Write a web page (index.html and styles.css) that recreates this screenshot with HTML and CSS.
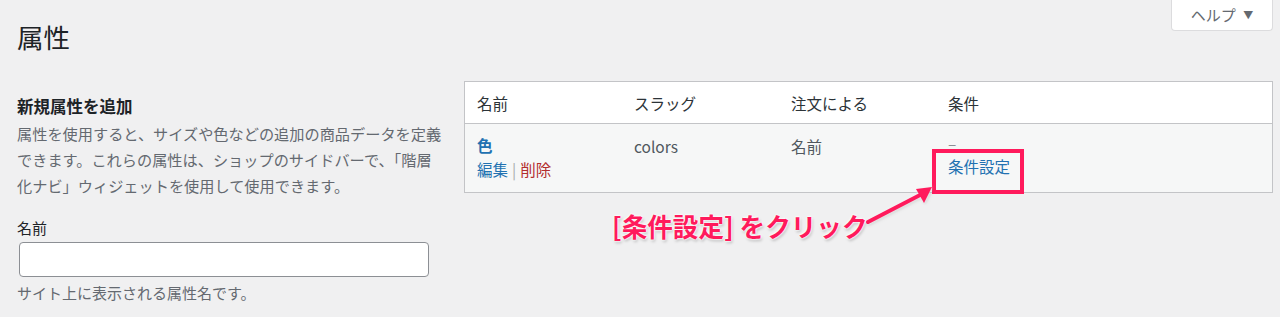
FILE: index.html
```html
<!DOCTYPE html>
<html lang="ja">
<head>
<meta charset="utf-8">
<link rel="stylesheet" href="styles.css">
</head>
<body>
<div class="page">
  <div class="top">
    <h1 class="title">属性</h1>
    <button class="help">ヘルプ <span class="caret">▼</span></button>
  </div>
  <div class="cols">
    <div class="left">
      <h2 class="sub">新規属性を追加</h2>
      <p class="desc">属性を使用すると、サイズや色などの追加の商品データを定義できます。これらの属性は、ショップのサイドバーで、「階層化ナビ」ウィジェットを使用して使用できます。</p>
      <label class="label">名前</label>
      <input class="input" type="text">
      <p class="hint">サイト上に表示される属性名です。</p>
    </div>
    <div class="right">
      <div class="table">
        <div class="row head">
          <div class="cell">名前</div>
          <div class="cell">スラッグ</div>
          <div class="cell">注文による</div>
          <div class="cell">条件</div>
        </div>
        <div class="row body">
          <div class="cell">
            <a class="name">色</a>
            <div class="actions"><a class="edit">編集</a><span class="sep">|</span><a class="del">削除</a></div>
          </div>
          <div class="cell">colors</div>
          <div class="cell">名前</div>
          <div class="cell">
            <div class="dash">–</div>
            <a class="edit">条件設定</a>
          </div>
        </div>
      </div>
    </div>
  </div>
  <div class="hl-box"></div>
  <svg class="arrow" width="80" height="56" viewBox="0 0 80 56">
    <line x1="8" y1="46" x2="62" y2="18" stroke="#ff1a5c" stroke-width="4" stroke-linecap="round"/>
    <polygon points="72,11 56,13 64,27" fill="#ff1a5c"/>
  </svg>
  <div class="note">[条件設定] をクリック</div>
</div>
</body>
</html>
```
FILE: styles.css
```css
html, body {
  margin: 0;
  padding: 0;
}
body {
  background: #f0f0f1;
  font-family: "Noto Sans CJK JP", "Noto Sans", sans-serif;
  color: #3c434a;
  width: 1280px;
  height: 317px;
  overflow: hidden;
}
.page {
  position: relative;
  padding-left: 17px;
  padding-right: 7px;
}
.top {
  display: flex;
  justify-content: space-between;
  align-items: flex-start;
}
.title {
  margin: 20px 0 0 0;
  font-size: 26.5px;
  line-height: 34px;
  font-weight: 400;
  color: #1d2327;
}
.help {
  margin-top: -1px;
  width: 102px;
  height: 32px;
  background: #fff;
  border: 1px solid #dcdcde;
  border-top: none;
  border-radius: 0 0 4px 4px;
  font-family: inherit;
  font-size: 15px;
  color: #646970;
  padding: 0;
}
.caret {
  font-size: 10px;
  margin-left: 4px;
  vertical-align: 2px;
}
.cols {
  display: flex;
  gap: 19px;
  margin-top: 27px;
}
.left {
  width: 428px;
  flex: none;
  padding-top: 13px;
}
.sub {
  margin: 0;
  font-size: 16.5px;
  line-height: 24px;
  font-weight: 700;
  color: #1d2327;
}
.desc {
  margin: 2px 0 0 0;
  font-size: 15.2px;
  line-height: 26px;
  color: #646970;
}
.label {
  display: block;
  margin-top: 18px;
  font-size: 15px;
  line-height: 24px;
  color: #1d2327;
}
.input {
  display: block;
  box-sizing: border-box;
  margin: 2px 0 0 2px;
  width: 410px;
  height: 35px;
  border: 1px solid #8c8f94;
  border-radius: 4px;
  background: #fff;
}
.hint {
  margin: 4px 0 0 0;
  font-size: 15px;
  line-height: 24px;
  color: #646970;
}
.right {
  flex: 1;
}
.table {
  border: 1px solid #c3c4c7;
  background: #fff;
}
.row {
  display: grid;
  grid-template-columns: 157px 157px 157px 1fr;
  padding-left: 12px;
}
.head {
  height: 41px;
  align-items: center;
  border-bottom: 1px solid #c3c4c7;
  font-size: 15.5px;
  color: #2c3338;
}
.body {
  background: #f6f7f7;
  padding-top: 9px;
  height: 59px;
  font-size: 15.5px;
  line-height: 26px;
  color: #50575e;
}
.name {
  display: block;
  font-weight: 700;
  color: #2271b1;
  line-height: 24px;
}
.actions {
  line-height: 25px;
}
.edit {
  color: #2271b1;
}
.del {
  color: #b32d2e;
}
.sep {
  color: #a7aaad;
  margin: 0 4px;
}
.dash {
  line-height: 20px;
  color: #8c8f94;
}
.hl-box {
  position: absolute;
  left: 932px;
  top: 149px;
  width: 92px;
  height: 45px;
  box-sizing: border-box;
  border: 4px solid #ff1a5c;
}
.arrow {
  position: absolute;
  left: 860px;
  top: 176px;
  filter: drop-shadow(0 0 1.5px #fff) drop-shadow(1px 1px 1px rgba(0,0,0,0.15));
}
.note {
  position: absolute;
  left: 612px;
  top: 208px;
  font-size: 25.6px;
  line-height: 36px;
  font-weight: 700;
  color: #ff1a5c;
  white-space: nowrap;
  text-shadow: 0 0 2px #fff, 0 0 2px #fff, 0 0 3px #fff, 1px 2px 3px rgba(0,0,0,0.25);
}
```
